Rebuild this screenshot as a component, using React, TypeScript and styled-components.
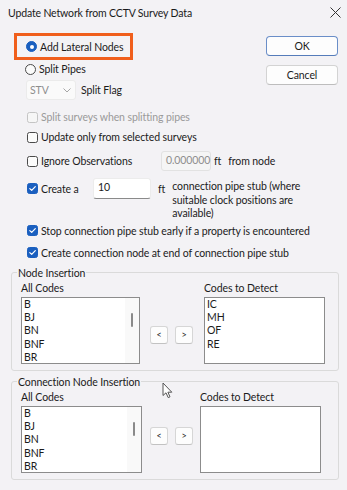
import React from 'react';
import styled, { createGlobalStyle } from 'styled-components';

const Global = createGlobalStyle`
  html, body { margin: 0; padding: 0; background: #f3f2f5; }
  body { font-family: Lato, "Liberation Sans", sans-serif; font-size: 10.5px; letter-spacing: -0.1px; line-height: 14px; color: #1b1b1b; }
  * { box-sizing: border-box; }
`;

const Window = styled.div`
  position: relative;
  width: 347px;
  height: 490px;
  overflow: hidden;
  background: #f3f2f5;
  display: flex;
  flex-direction: column;
`;

const TitleBar = styled.div`
  height: 25px;
  flex: none;
  display: flex;
  align-items: center;
  justify-content: space-between;
  padding: 0 6px 0 8px;
  font-size: 10.5px;
  letter-spacing: -0.15px;
  color: #1a1a1a;
`;

const Top = styled.div`
  display: grid;
  grid-template-columns: minmax(0, 1fr) 72px;
  padding: 8px 9px 0 0;
`;

const Options = styled.div`
  display: flex;
  flex-direction: column;
  white-space: nowrap;
`;

const SideButtons = styled.div`
  display: flex;
  flex-direction: column;
  gap: 9px;
  padding-top: 3px;
`;

const DialogButton = styled.button<{ $default?: boolean }>`
  height: 20px;
  width: 72px;
  padding: 0;
  border-radius: 4px;
  background: #fdfdfd;
  border: 1px solid ${(p) => (p.$default ? '#6a8ec8' : '#d3d3d3')};
  border-bottom-color: ${(p) => (p.$default ? '#557cba' : '#bdbdbd')};
  font-family: inherit;
  font-size: 10.5px;
  letter-spacing: -0.1px;
  color: #1b1b1b;
`;

const Highlight = styled.div`
  margin-left: 14px;
  width: 119px;
  height: 27px;
  border: 3px solid #f05f1c;
  display: flex;
  align-items: center;
  padding-left: 9px;
`;

const Row = styled.div<{ $mt: number; $h?: number; $pl: number; $top?: boolean }>`
  margin-top: ${(p) => p.$mt}px;
  height: ${(p) => (p.$h ? `${p.$h}px` : 'auto')};
  padding-left: ${(p) => p.$pl}px;
  display: flex;
  align-items: ${(p) => (p.$top ? 'flex-start' : 'center')};
`;

const Radio = styled.span<{ $on?: boolean }>`
  width: 11px;
  height: 11px;
  flex: none;
  border-radius: 50%;
  border: 1px solid ${(p) => (p.$on ? '#1a5fbf' : '#4a4a4a')};
  background: ${(p) => (p.$on ? '#1a5fbf' : '#fbfbfb')};
  display: flex;
  align-items: center;
  justify-content: center;
  &::after {
    content: '';
    display: ${(p) => (p.$on ? 'block' : 'none')};
    width: 4px;
    height: 4px;
    border-radius: 50%;
    background: #fff;
  }
`;

const Box = styled.span<{ $on?: boolean; $disabled?: boolean }>`
  width: 11px;
  height: 11px;
  flex: none;
  border-radius: 2.5px;
  border: 1px solid ${(p) => (p.$on ? '#1a5fbf' : p.$disabled ? '#c4c4c4' : '#4a4a4a')};
  background: ${(p) => (p.$on ? '#1a5fbf' : p.$disabled ? '#f6f6f6' : '#fbfbfb')};
  display: flex;
  align-items: center;
  justify-content: center;
`;

const Text = styled.span<{ $ml?: number; $w?: number; $muted?: boolean }>`
  margin-left: ${(p) => p.$ml ?? 0}px;
  width: ${(p) => (p.$w ? `${p.$w}px` : 'auto')};
  flex: none;
  color: ${(p) => (p.$muted ? '#9a9a9a' : '#1b1b1b')};
  line-height: 14px;
`;

const Select = styled.div`
  width: 50px;
  height: 20px;
  border: 1px solid #ebebeb;
  border-radius: 3px;
  background: #fafafa;
  display: flex;
  align-items: center;
  justify-content: space-between;
  padding: 0 4px 0 3px;
  color: #8e8e8e;
`;

const Field = styled.div<{ $w: number; $h: number; $disabled?: boolean }>`
  width: ${(p) => p.$w}px;
  height: ${(p) => p.$h}px;
  flex: none;
  border: 1px solid ${(p) => (p.$disabled ? '#e2e2e2' : '#ececec')};
  border-bottom-color: ${(p) => (p.$disabled ? '#e2e2e2' : '#8a8a8a')};
  border-radius: 3px;
  background: ${(p) => (p.$disabled ? '#f5f5f5' : '#ffffff')};
  color: ${(p) => (p.$disabled ? '#8e8e8e' : '#1b1b1b')};
  padding: 1px 0 0 4px;
  line-height: 14px;
`;

const StubText = styled.div`
  margin-left: 7px;
  margin-top: 2px;
  line-height: 13.5px;
  white-space: nowrap;
`;

const Group = styled.fieldset<{ $mt: number }>`
  margin: ${(p) => p.$mt}px 8px 0 11px;
  padding: 0 0 6px 9px;
  border: 1px solid #dadada;
  border-radius: 3px;
  min-width: 0;
  flex: none;
`;

const Legend = styled.legend`
  padding: 0 1px;
  margin-left: -4px;
  line-height: 16px;
`;

const GroupBody = styled.div`
  display: flex;
  align-items: flex-start;
`;

const Column = styled.div<{ $ml?: number }>`
  margin-left: ${(p) => p.$ml ?? 0}px;
  display: flex;
  flex-direction: column;
`;

const ColLabel = styled.div`
  height: 14px;
  line-height: 14px;
  margin-bottom: 2px;
`;

const ListBox = styled.div<{ $w: number }>`
  width: ${(p) => p.$w}px;
  height: 67px;
  border: 1px solid #8c8c8c;
  background: #ffffff;
  display: flex;
  overflow: hidden;
`;

const Items = styled.div`
  flex: 1;
  padding: 0 0 0 2px;
  line-height: 13.4px;
`;

const Track = styled.div`
  width: 14px;
  flex: none;
  background: #f9f9f9;
  display: flex;
  justify-content: center;
  padding-top: 15px;
`;

const Thumb = styled.div`
  width: 2px;
  height: 14px;
  border-radius: 1px;
  background: #8a8a8a;
`;

const MoveButtons = styled.div<{ $mt: number; $ml: number }>`
  margin-top: ${(p) => p.$mt}px;
  margin-left: ${(p) => p.$ml}px;
  display: flex;
  gap: 7px;
`;

const SmallButton = styled.button`
  width: 18px;
  height: 18px;
  padding: 0;
  border: 1px solid #d6d6d6;
  border-bottom-color: #c2c2c2;
  border-radius: 3px;
  background: #fdfdfd;
  font-family: inherit;
  font-size: 9px;
  line-height: 16px;
  color: #1b1b1b;
`;

const Cursor = styled.svg`
  position: absolute;
  left: 162px;
  top: 382px;
`;

const Check = () => (
  <svg width="9" height="9" viewBox="0 0 9 9">
    <path d="M1.8 4.6 L3.7 6.4 L7.3 2.6" fill="none" stroke="#fff" strokeWidth="1.2" strokeLinecap="round" strokeLinejoin="round" />
  </svg>
);

const codes = ['B', 'BJ', 'BN', 'BNF', 'BR'];

type ListSectionProps = {
  leftW: number;
  rightW: number;
  gapA: number;
  gapB: number;
  btnTop: number;
  detect: string[];
};

const ListSection = ({ leftW, rightW, gapA, gapB, btnTop, detect }: ListSectionProps) => (
  <GroupBody>
    <Column>
      <ColLabel>All Codes</ColLabel>
      <ListBox $w={leftW}>
        <Items>
          {codes.map((c) => (
            <div key={c}>{c}</div>
          ))}
        </Items>
        <Track>
          <Thumb />
        </Track>
      </ListBox>
    </Column>
    <MoveButtons $mt={btnTop} $ml={gapA}>
      <SmallButton>&lt;</SmallButton>
      <SmallButton>&gt;</SmallButton>
    </MoveButtons>
    <Column $ml={gapB}>
      <ColLabel>Codes to Detect</ColLabel>
      <ListBox $w={rightW}>
        <Items>
          {detect.map((c) => (
            <div key={c}>{c}</div>
          ))}
        </Items>
      </ListBox>
    </Column>
  </GroupBody>
);

export default function App() {
  return (
    <>
      <Global />
      <Window>
        <TitleBar>
          <span>Update Network from CCTV Survey Data</span>
          <svg width="11" height="11" viewBox="0 0 11 11">
            <path d="M0.5 0.5 L10.5 10.5 M10.5 0.5 L0.5 10.5" stroke="#333" strokeWidth="1" />
          </svg>
        </TitleBar>
        <Top>
          <Options>
            <Highlight>
              <Radio $on />
              <Text $ml={3}>Add Lateral Nodes</Text>
            </Highlight>
            <Row $mt={1} $h={16} $pl={25}>
              <Radio />
              <Text $ml={3}>Split Pipes</Text>
            </Row>
            <Row $mt={3} $h={20} $pl={26}>
              <Select>
                <span>STV</span>
                <svg width="8" height="5" viewBox="0 0 8 5">
                  <path d="M0.5 0.5 L4 4 L7.5 0.5" fill="none" stroke="#a6a6a6" strokeWidth="1" />
                </svg>
              </Select>
              <Text $ml={5}>Split Flag</Text>
            </Row>
            <Row $mt={9} $h={16} $pl={27}>
              <Box $disabled />
              <Text $ml={3} $muted>Split surveys when splitting pipes</Text>
            </Row>
            <Row $mt={4} $h={16} $pl={27}>
              <Box />
              <Text $ml={3}>Update only from selected surveys</Text>
            </Row>
            <Row $mt={6} $h={20} $pl={27}>
              <Box />
              <Text $ml={3} $w={120}>Ignore Observations</Text>
              <Field $w={50} $h={20} $disabled>0.000000</Field>
              <Text $ml={3}>ft</Text>
              <Text $ml={7}>from node</Text>
            </Row>
            <Row $mt={7} $pl={27} $top>
              <Row $mt={0} $h={21} $pl={0}>
                <Box $on>
                  <Check />
                </Box>
                <Text $ml={3} $w={52}>Create a</Text>
                <Field $w={58} $h={21}>10</Field>
                <Text $ml={7}>ft</Text>
              </Row>
              <StubText>
                connection pipe stub (where
                <br />
                suitable clock positions are
                <br />
                available)
              </StubText>
            </Row>
            <Row $mt={2} $h={16} $pl={27}>
              <Box $on>
                <Check />
              </Box>
              <Text $ml={3}>Stop connection pipe stub early if a property is encountered</Text>
            </Row>
            <Row $mt={6} $h={16} $pl={27}>
              <Box $on>
                <Check />
              </Box>
              <Text $ml={3}>Create connection node at end of connection pipe stub</Text>
            </Row>
          </Options>
          <SideButtons>
            <DialogButton $default>OK</DialogButton>
            <DialogButton>Cancel</DialogButton>
          </SideButtons>
        </Top>
        <Group $mt={4}>
          <Legend>Node Insertion</Legend>
          <ListSection leftW={119} rightW={121} gapA={10} gapB={11} btnTop={45} detect={['IC', 'MH', 'OF', 'RE']} />
        </Group>
        <Group $mt={3}>
          <Legend>Connection Node Insertion</Legend>
          <ListSection leftW={121} rightW={121} gapA={8} gapB={7} btnTop={37} detect={[]} />
        </Group>
        <Cursor width="11" height="17" viewBox="0 0 11 17">
          <path d="M1 1 L1 13.5 L4 10.8 L6.2 15.6 L8 14.8 L5.9 10.2 L9.8 10.2 Z" fill="#fff" stroke="#555" strokeWidth="1" strokeLinejoin="round" />
        </Cursor>
      </Window>
    </>
  );
}
